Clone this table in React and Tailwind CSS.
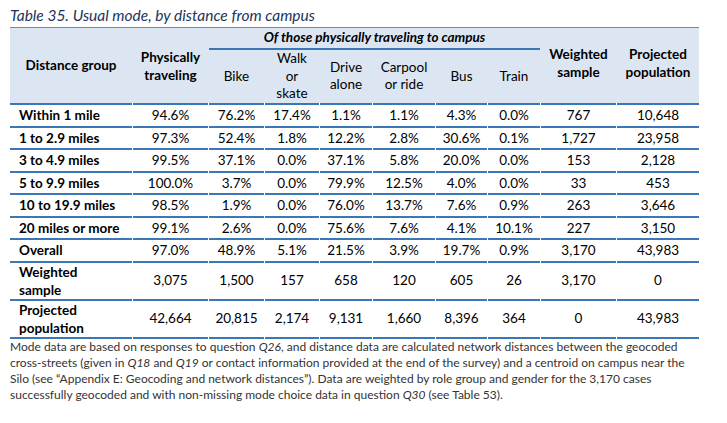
import React from "react";

const COLS = "grid grid-cols-[122px_75px_55px_54px_52px_62px_51px_52px_75px_82px] gap-x-px";

const rows = [
  ["Within 1 mile", "94.6%", "76.2%", "17.4%", "1.1%", "1.1%", "4.3%", "0.0%", "767", "10,648"],
  ["1 to 2.9 miles", "97.3%", "52.4%", "1.8%", "12.2%", "2.8%", "30.6%", "0.1%", "1,727", "23,958"],
  ["3 to 4.9 miles", "99.5%", "37.1%", "0.0%", "37.1%", "5.8%", "20.0%", "0.0%", "153", "2,128"],
  ["5 to 9.9 miles", "100.0%", "3.7%", "0.0%", "79.9%", "12.5%", "4.0%", "0.0%", "33", "453"],
  ["10 to 19.9 miles", "98.5%", "1.9%", "0.0%", "76.0%", "13.7%", "7.6%", "0.9%", "263", "3,646"],
  ["20 miles or more", "99.1%", "2.6%", "0.0%", "75.6%", "7.6%", "4.1%", "10.1%", "227", "3,150"],
  ["Overall", "97.0%", "48.9%", "5.1%", "21.5%", "3.9%", "19.7%", "0.9%", "3,170", "43,983"],
];

const tallRows = [
  [["Weighted", "sample"], "3,075", "1,500", "157", "658", "120", "605", "26", "3,170", "0"],
  [["Projected", "population"], "42,664", "20,815", "2,174", "9,131", "1,660", "8,396", "364", "0", "43,983"],
];

function Row({ cells, tall }) {
  const h = tall ? "h-[38px]" : "h-[22.5px]";
  return (
    <div className={COLS}>
      {cells.map((c, i) => (
        <div
          key={i}
          className={`${h} border-b-2 border-[#3b76b6] flex items-center ${
            i === 0 ? "justify-start pl-[9px] font-bold leading-[18px]" : "justify-center"
          }`}
        >
          {Array.isArray(c) ? (
            <span>
              {c[0]}
              <br />
              {c[1]}
            </span>
          ) : (
            c
          )}
        </div>
      ))}
    </div>
  );
}

export default function App() {
  return (
    <div
      className="w-[727px] h-[423px] bg-white text-black overflow-hidden"
      style={{ fontFamily: "Lato, 'Liberation Sans', sans-serif" }}
    >
      <div className="h-[27px] pt-[5px] pl-[10px] text-[15.5px] leading-[20px] italic text-[#1d3458]">
        Table 35. Usual mode, by distance from campus
      </div>
      <div className="ml-[10px] w-[689px] text-[13.5px]">
        {/* Header */}
        <div className={`${COLS} bg-[#dce6f2] border-t border-[#5b8cc4] grid-rows-[19.5px_2px_53.5px] leading-[17.5px]`}>
          <div className="col-start-1 row-start-1 row-span-3 flex items-center justify-center font-bold text-center">
            Distance group
          </div>
          <div className="col-start-2 row-start-1 row-span-3 flex items-center justify-center font-bold text-center leading-[18px]">
            Physically
            <br />
            traveling
          </div>
          <div className="col-start-3 col-span-6 row-start-1 flex items-center justify-center font-bold italic">
            Of those physically traveling to campus
          </div>
          <div className="col-start-3 col-span-6 row-start-2 bg-[#3b76b6]" />
          <div className="col-start-3 row-start-3 flex items-center justify-center text-center">Bike</div>
          <div className="col-start-4 row-start-3 flex items-center justify-center text-center">
            Walk
            <br />
            or
            <br />
            skate
          </div>
          <div className="col-start-5 row-start-3 flex items-center justify-center text-center">
            Drive
            <br />
            alone
          </div>
          <div className="col-start-6 row-start-3 flex items-center justify-center text-center">
            Carpool
            <br />
            or ride
          </div>
          <div className="col-start-7 row-start-3 flex items-center justify-center text-center">Bus</div>
          <div className="col-start-8 row-start-3 flex items-center justify-center text-center">Train</div>
          <div className="col-start-9 row-start-1 row-span-3 flex items-center justify-center font-bold text-center leading-[18px] pb-[6px]">
            Weighted
            <br />
            sample
          </div>
          <div className="col-start-10 row-start-1 row-span-3 flex items-center justify-center font-bold text-center leading-[18px] pb-[6px]">
            Projected
            <br />
            population
          </div>
        </div>
        {/* Header bottom line */}
        <div className={COLS}>
          {Array.from({ length: 10 }).map((_, i) => (
            <div key={i} className="h-[2px] bg-[#3b76b6]" />
          ))}
        </div>
        {rows.map((r, i) => (
          <Row key={i} cells={r} />
        ))}
        {tallRows.map((r, i) => (
          <Row key={i} cells={r} tall />
        ))}
      </div>
      <div className="pl-[10px] text-[12px] leading-[16px] text-[#333] whitespace-nowrap">
        <div>
          Mode data are based on responses to question <i>Q26</i>, and distance data are calculated network distances between the geocoded
        </div>
        <div>
          cross-streets (given in <i>Q18</i> and <i>Q19</i> or contact information provided at the end of the survey) and a centroid on campus near the
        </div>
        <div>
          Silo (see “Appendix E: Geocoding and network distances”). Data are weighted by role group and gender for the 3,170 cases
        </div>
        <div>
          successfully geocoded and with non-missing mode choice data in question <i>Q30</i> (see Table 53).
        </div>
      </div>
    </div>
  );
}
